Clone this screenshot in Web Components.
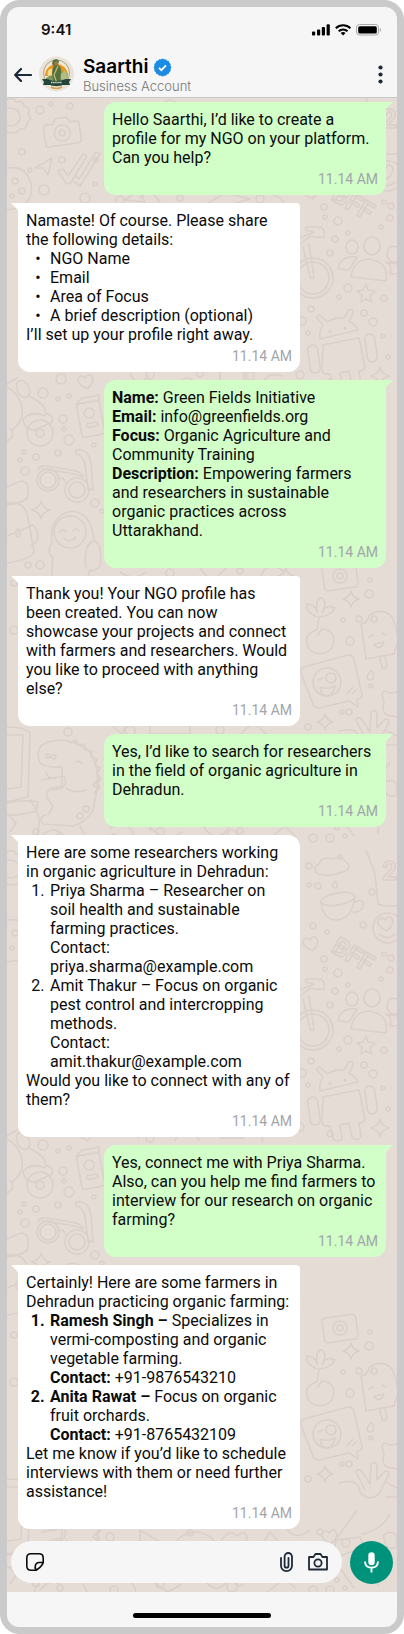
<!DOCTYPE html>
<html lang="en">
<head>
<meta charset="utf-8">
<meta name="viewport" content="width=device-width, initial-scale=1">
<title>Saarthi chat</title>
<style>
  @counter-style steps { system: extends decimal; suffix: ".\2004"; }
  body { margin: 0; background: #fff; font-family: Roboto, "Liberation Sans", sans-serif; color: #0b0b0b; }
  ul { list-style-type: "•\00a0\2004"; }
  ol { list-style-type: steps; }
  li.lead::marker { font-weight: 700; }
</style>
</head>
<body>
<phone-frame>
  <status-bar>9:41</status-bar>
  <chat-header>Saarthi<span slot="kind">Business Account</span></chat-header>
  <chat-thread>
    <chat-bubble out>Hello Saarthi, I’d like to create a profile for my NGO on your platform. Can you help?</chat-bubble>
    <chat-bubble>Namaste! Of course. Please share the following details:
      <ul><li>NGO Name</li><li>Email</li><li>Area of Focus</li><li>A brief description (optional)</li></ul>
      I’ll set up your profile right away.</chat-bubble>
    <chat-bubble out><b>Name:</b> Green Fields Initiative<br><b>Email:</b> info@greenfields.org<br><b>Focus:</b> Organic Agriculture and Community Training<br><b>Description:</b> Empowering farmers and researchers in sustainable organic practices across Uttarakhand.</chat-bubble>
    <chat-bubble>Thank you! Your NGO profile has been created. You can now showcase your projects and connect with farmers and researchers. Would you like to proceed with anything else?</chat-bubble>
    <chat-bubble out>Yes, I’d like to search for researchers in the field of organic agriculture in Dehradun.</chat-bubble>
    <chat-bubble round>Here are some researchers working in organic agriculture in Dehradun:
      <ol><li>Priya Sharma – Researcher on soil health and sustainable farming practices.<br>Contact: priya.sharma@example.com</li><li>Amit Thakur – Focus on organic pest control and intercropping methods.<br>Contact: amit.thakur@example.com</li></ol>
      Would you like to connect with any of them?</chat-bubble>
    <chat-bubble out>Yes, connect me with Priya Sharma. Also, can you help me find farmers to interview for our research on organic farming?</chat-bubble>
    <chat-bubble>Certainly! Here are some farmers in Dehradun practicing organic farming:
      <ol><li class="lead"><b>Ramesh Singh –</b> Specializes in vermi-composting and organic vegetable farming.<br><b>Contact:</b> +91-9876543210</li><li class="lead"><b>Anita Rawat –</b> Focus on organic fruit orchards.<br><b>Contact:</b> +91-8765432109</li></ol>
      Let me know if you’d like to schedule interviews with them or need further assistance!</chat-bubble>
    <chat-composer slot="composer"></chat-composer>
  </chat-thread>
  <home-indicator></home-indicator>
</phone-frame>

<script>
const define = (name, html) => customElements.define(name, class extends HTMLElement {
  constructor() {
    super();
    const t = document.createElement('template');
    t.innerHTML = html;
    this.attachShadow({ mode: 'open' }).append(t.content.cloneNode(true));
  }
});

define('phone-frame', `
<style>
  :host { display: block; box-sizing: border-box; border: 7px solid #cacaca; border-radius: 20px; background: #cacaca; }
  main { display: flex; flex-direction: column; overflow: hidden; border-radius: 12px; background: #f6f6f6; }
</style>
<main><slot></slot></main>`);

define('status-bar', `
<style>
  :host { display: flex; align-items: center; justify-content: space-between; box-sizing: border-box; height: 45px; padding: 0 15px 0 34px; font: 600 15px/20px Inter, sans-serif; color: #111; }
  svg { display: block; }
</style>
<span><slot></slot></span>
<svg width="71" height="14" viewBox="0 0 71 14" aria-label="Signal, Wi-Fi, battery">
  <g fill="#000"><rect x="1" y="8.500" width="3.200" height="4" rx="1"/><rect x="6" y="6.500" width="3.200" height="6" rx="1"/><rect x="10.800" y="4" width="3.200" height="8.500" rx="1"/><rect x="15.600" y="1.200" width="3.200" height="11.300" rx="1"/></g>
  <g fill="none" stroke="#000" stroke-width="2"><path d="M24.800 5.200a10.400 10.400 0 0 1 14.600 0"/><path d="M27.700 8.200a6.300 6.300 0 0 1 8.800 0"/></g>
  <path d="M32.100 12.600l-2.400-2.500a3.500 3.500 0 0 1 4.800 0z" fill="#000"/>
  <rect x="45.500" y="1.500" width="22" height="10.500" rx="3" fill="none" stroke="#aaa"/><rect x="47.200" y="3.200" width="18.600" height="7.200" rx="1.500"/><path d="M68.800 5v3.800a2 2 0 0 0 0-3.800z" fill="#aaa"/>
</svg>`);

define('chat-header', `
<style>
  :host { display: flex; align-items: center; box-sizing: border-box; height: 46px; padding: 0 8px 1px 7px; border-bottom: 1px solid #c9c9c9; font-family: Inter, sans-serif; }
  button { border: 0; padding: 0; background: none; display: flex; }
  .photo { margin: 0 9px 0 7px; flex: none; }
  .who { flex: 1; min-width: 0; padding-top: 2px; }
  h1 { display: flex; align-items: center; gap: 5px; margin: 0; font-size: 19px; line-height: 22px; font-weight: 600; color: #000; }
  p { margin: 0; font-size: 13px; line-height: 16px; font-weight: 300; color: #777; }
</style>
<button aria-label="Back"><svg width="18" height="16" viewBox="0 0 18 16" fill="none" stroke="#1d2939" stroke-width="2.200" stroke-linecap="round" stroke-linejoin="round"><path d="M17 9H1.500M7 3L1.200 9L7 15"/></svg></button>
<svg class="photo" width="35" height="36" viewBox="0 0 35 36" role="img" aria-label="Saarthi logo">
  <circle cx="17.500" cy="18" r="17.400" fill="#e9e3d7"/>
  <circle cx="17.500" cy="17" r="13" fill="#efe8d4" stroke="#9a926f" stroke-width=".8"/>
  <path d="M6 20a11.500 12 0 0 1 23 0z" fill="#e8961f"/>
  <circle cx="13" cy="17" r="4.500" fill="#ffd98a"/>
  <path d="M7 22q6-5 11-2q5-8 11-2l-1 7H7z" fill="#7f9560"/>
  <path d="M20 20l6-6 4 8-5 5z" fill="#b3bd82"/>
  <path d="M14 4q5-2 6 1l-1 4q4 2 3 8l-1 10h-6l-2-9q0-6 2-8l-2-2z" fill="#54713f"/>
  <path d="M15 6l4-1v4l-3 1z" fill="#a2763f"/>
  <path d="M19 10l-4 9 3 8" fill="none" stroke="#c7ba72" stroke-width="1.200"/>
  <path d="M3 23l5 0q9 4 19 0l5 0-2 3 1 3-7 0q-7 2-13 0l-7 0 1-3z" fill="#24453b"/>
  <path d="M12 26.500h11" stroke="#dce0c8" stroke-width="1.500" stroke-dasharray="1.500 .6"/>
  <path d="M12 31q5 3 11 0" fill="none" stroke="#d8a04c" stroke-width="1.500"/>
</svg>
<div class="who">
  <h1><slot></slot>
    <svg width="19" height="19" viewBox="0 0 20 20" role="img" aria-label="Verified"><g fill="#1c8be4"><rect x="3" y="3" width="14" height="14" rx="1.500"/><rect x="3" y="3" width="14" height="14" rx="1.500" transform="rotate(22.500 10 10)"/><rect x="3" y="3" width="14" height="14" rx="1.500" transform="rotate(45 10 10)"/><rect x="3" y="3" width="14" height="14" rx="1.500" transform="rotate(67.500 10 10)"/></g><path d="M6.300 10.300l2.500 2.500 4.900-5" fill="none" stroke="#fff" stroke-width="1.900"/></svg>
  </h1>
  <p><slot name="kind"></slot></p>
</div>
<button aria-label="More options"><svg width="17" height="20" viewBox="0 0 17 20" fill="#1d2939"><circle cx="8.500" cy="3.500" r="2.100"/><circle cx="8.500" cy="10.500" r="2.100"/><circle cx="8.500" cy="17.500" r="2.100"/></svg></button>`);

// Small rings scattered between the wallpaper doodles: x, y, radius.
const rings = [
  324,207,3,325,217,2,338,221,4,348,233,2,335,239,3,330,253,3,348,288,4,339,297,2,384,298,3,311,309,3,302,321,4,308,333,2,364,313,3,373,322,4,383,336,2,388,357,2,384,202,2,391,206,3,390,218,3,381,227,2,
  309,114,3,309,133,2,318,134,3,372,140,3,363,173,3,313,174,3,327,180,2,340,105,2,
  40,110,4,51,104,2,22,152,3,62,160,3,85,198,5,44,190,5,95,184,2,96,160,2,30,170,2,70,106,3,
  61,379,5,43,393,5,58,399,2,69,396,2,63,419,4,64,429,2,69,440,5,24,452,2,36,457,3,58,453,3,20,460,2,25,471,4,94,445,2,95,503,4,102,511,2,28,565,3,40,565,4,14,583,3,14,630,4,68,732,4,80,816,3,86,809,3,36,832,3,
  369,594,4,370,580,2,359,619,3,374,619,3,350,641,4,343,620,2,371,686,2,342,712,2,349,712,3,308,727,3,313,838,4,330,838,4,337,828,2,345,836,2,300,375,4,
  150,375,4,200,374,3,250,376,4,170,573,4,240,571,3,130,731,5,220,730,4,160,832,4,240,831,3,120,200,4,180,198,3,260,199,4,
  150,386,4,110,785,4,190,781,3,114,838,4,60,836,3,320,780,3,346,791,4,316,800,2,232,835,5,330,382,3
].reduce((s, v, i, a) => i % 3 ? s : s + `<circle cx="${v}" cy="${a[i + 1]}" r="${a[i + 2]}"/>`, '');

const spark = (x, y, r) => `<path d="M${x} ${y - r}Q${x + 1} ${y - 2} ${x + r} ${y}Q${x + 1} ${y + 2} ${x} ${y + r}Q${x - 1} ${y + 2} ${x - r} ${y}Q${x - 1} ${y - 2} ${x} ${y - r}z"/>`;
const heart = (x, y) => `<path d="M${x} ${y + 7}q-10-7-7-12q4-4 7 1q4-5 7 0q2 5-7 11z" transform="rotate(-12 ${x} ${y})"/>`;

const doodles = `
<g transform="translate(-7 -98)">
  ${rings}
  ${spark(380, 376, 9)}${spark(41, 510, 9)}${spark(351, 599, 8)}${spark(325, 722, 8)}${spark(286, 576, 8)}
  ${heart(311, 192)}${heart(86, 382)}${heart(386, 172)}${heart(330, 785)}
  <path d="M7 100q6-4 9 2q7-2 8 4q7 2 4 8q5 5-1 9q0 7-7 6q-5 6-13 3"/><circle cx="11" cy="117" r="9"/>
  <g transform="rotate(-8 62 131)"><path d="M47 123h7l3-5h11l3 5h6q3 0 3 3v16q0 3-3 3H47q-3 0-3-3v-16q0-3 3-3z"/><circle cx="62" cy="133" r="8"/><circle cx="62" cy="133" r="3"/></g>
  <path d="M35 168l17-10-4 17-5-7zM58 171l5-2 5 7 15-22 4 2-17 28-4-1zM76 176l3 3 17-27 4 2-20 32-6-4"/>
  <path d="M7 168q20-3 24 16q3 17-13 24l-11 2"/><circle cx="15" cy="181" r="3"/><circle cx="22" cy="191" r="3"/><circle cx="12" cy="196" r="2"/>
  <path d="M318 122q-7-6 1-10q3-8 13-5q9-4 14 3q7 6-3 10q-14 5-25 2zM335 129q-5 6 0 7q5-1 0-7z"/>
  <ellipse cx="338" cy="147" rx="17" ry="6" transform="rotate(-10 338 147)"/><path d="M321 150q2 19 17 18q14-2 17-23M355 150q9-4 8 4q-2 7-10 6"/>
  <circle cx="388" cy="176" r="15"/><path d="M379 182q9 7 16 0"/>
  <path d="M366 98l9 24 3 30q10 4 20 1"/>
  <text x="382" y="128" font-size="26" font-weight="700">2</text>
  <text x="330" y="199" font-size="25" font-weight="700" transform="rotate(31 330 199)">BFF</text>
  <circle cx="313" cy="278" r="20"/><circle cx="313" cy="278" r="16"/><path d="M303 247l7 30q2 3 4 0l-5-33M300 238l14-6-8-2q-2-3 2-3h12q6 2 4 10q-9 1-14-1l-12 10"/>
  <ellipse cx="352" cy="247" rx="6" ry="7"/><ellipse cx="372" cy="246" rx="8" ry="9"/><path d="M351 277q2-17 18-18q20 3 17 22zM338 269q3-14 19-12l-8 13zM397 247q-10-3-10 8q3 9 10 7M386 262l11 2M386 262q7 3 4 12h7"/>
  <path d="M366 284l2 6 7 1-5 5 2 6-6-3-5 3 1-7-5-4 6-1z"/>
  <path d="M320 339q-1-10 3-14l-6-7q1-5 5-1l5 5q8-5 17-4l5-8q4-2 4 3l-4 8q6 3 9 9z"/><circle cx="330" cy="331" r="1"/><circle cx="345" cy="328" r="1"/>
  <path d="M323 345l36-7 6 29q-1 4-6 4l2 14q-5 5-9 0l-3-14-9 2 2 14q-5 4-9 0l-3-13q-7 1-8-4z"/><rect x="309" y="345" width="10" height="28" rx="5" transform="rotate(-8 314 359)"/><rect x="366" y="334" width="10" height="28" rx="5" transform="rotate(-8 371 348)"/>
  <ellipse cx="23" cy="389" rx="6" ry="9" transform="rotate(-25 23 389)"/><path d="M7 384l10-6M29 396q20 10 16 20q-12-6-22 3q2 12 12 11l17-8q2-7-7-9M12 430q12-8 10-23q-4-15-15-20M7 441q10-5 3-13"/>
  <circle cx="40" cy="433" r="13"/><circle cx="40" cy="433" r="4"/>
  <g transform="rotate(-10 90 418)"><rect x="79" y="402" width="23" height="34" rx="3"/><path d="M79 402l6-5h18l-1 5"/><circle cx="90" cy="413" r="5"/><rect x="85" y="423" width="12" height="4" rx="2"/></g>
  <circle cx="48" cy="480" r="11"/><circle cx="48" cy="480" r="8"/><circle cx="77" cy="490" r="12"/><circle cx="77" cy="490" r="8"/><path d="M59 479q4-3 7 4M38 470q1-5 8-4l30 5q8 3 7 6q-4-2-8-3l-32-5M76 450q13-2 15 14l2 26-5-1-3-25q-2-9-9-10z"/>
  <path d="M7 487l14-6q6 0 7 6v10q-4 6-21 8M7 503q18-2 21 14l6 35q-4 8-27 11M7 536l26-11q10 12 0 20l-2 1"/><ellipse cx="18" cy="533" rx="2" ry="4"/>
  <circle cx="70" cy="532" r="16"/><path d="M52 577q0-12 1-20q-6-3-3-11l2-2q-4-28 20-33q20 2 22 30q9 3 6 25q-6 6-10 4l-2 7zM86 568q-3-20 6-27M60 532q3-4 6 0M73 531q3-4 6 0M64 538q6 6 12-1"/>
  <path d="M7 727q18 0 23 6l-2 64-21 5M7 735h16l-2 52-14 2M7 803q20-4 31-1l-2 9q-16 5-29 4M9 815l7 8-6 9"/>
  <path d="M62 767q-16 1-22-4q-6-17 8-21q20-6 40 8q12 14 9 40l-4 20q-6 12-20 16l-30-2q-6-8 6-10l4-8-6-8q-2-8 6-10l9-2zM46 772q2 8 10 6M66 788q8 6 20 2M76 762q4-2 6 2"/><path d="M70 743l6-3 2 5 6-1 1 6 7 1-1 6 6 2-2 6 5 3-3 6 4 4-4 5 3 5-5 4"/><circle cx="48" cy="756" r="2"/><circle cx="54" cy="757" r="2"/>
  <g transform="rotate(-8 340 576)"><rect x="323" y="564" width="34" height="25" rx="4"/><circle cx="340" cy="576" r="7"/><circle cx="340" cy="576" r="3"/></g>
  <path d="M317 617q-12-5-10-13q8 0 10 8q-2-14 5-14q6 5 0 15q5-10 13-5q-4 8-16 9l-2 13M316 630q-14 5-7 19q12 10 23-1q6-18-10-19l-4 6"/>
  <path d="M369 616q-2 8-8 8l5 35 28-5 3-10M369 616q10-8 20-2q8 8 8 22M380 658l2 9q4 4 5-2l-2-8M369 637l4-2M382 633l3 2M374 644q6 8 10-2z"/>
  <path d="M304 667l44-12q4-1 6 4l8 36q0 4-5 4l1 8-9-6-30 7q-5 0-6-4l-12-31q-1-4 3-6z"/><circle cx="327" cy="682" r="14"/><circle cx="331" cy="678" r="5"/><path d="M318 680l5-2M320 687q8 3 15-1q-3 12-11 9q-3-2-4-8zM347 694l6-7M352 694l4-4"/>
  <path d="M371 670q-7 9-1 10q7-1 1-10zM397 692l-8 1q-5-4-7 1l2 8q-3 9 3 13l10 2M340 731q16-5 20 7M365 738l-9-18q2-5 6 0l8 12 1-20q5-4 6 2v14l8-9q6 0 3 5l-9 18q-12 9-20-4"/>
  <path d="M316 84q6-9 18-5l18-8q4 6-2 12M370 90l12-24M385 730l12 6M386 745h11"/>
  <path d="M110 104h30l8 8-30 12zM160 106q10-12 20 0t20 0M125 200l14-10 6 12zM140 198q10-12 20 4M205 205l20-12 25 6-44 12zM270 194q12 2 16 12M130 374l8 12 10-10M175 388q12-20 24 0M220 370h24v16h-24zM262 390q2-20 20-14"/>
  <path d="M120 572q14 10 26 0M196 564l16 18 14-14M260 578q8-20 24-6M110 724l12 10 6-12M150 722h40v12h-40zM240 736q12-20 26-2M150 828l18 12 14-8M200 822q16 26 30 4M265 842l20-16 10 10"/>
  <path d="M42 780l22-4q4 8-2 12l-10 2M99 779l-6 6 5 4-4 5M140 778l20 12-20 8zM174 796q4-16 24-16q18 4 20 18M222 788q8-12 15-4q7-6 10 0q0 10-9 6q-4 8-10 2q-10 6-6-4zM262 792l8-12 12 14M286 776q10 14 24 2M334 800l2-12 24-3 4 10-26 10zM337 786l20-28M362 782q20-4 28-20M385 790q-4-9 4-9q7-2 8 6v8q-10 4-12-5z"/>
  <path d="M40 838q12-14 22-4M80 826l10 20 14-6M110 828q20-10 26 12M150 800v30M300 800q18-14 26 12M340 816l14 20M366 808q14 4 12 26M30 800q16 20 4 40"/>
</g>`;

define('chat-thread', `
<style>
  :host { display: block; position: relative; background: #e5dcd6; }
  .paper { position: absolute; inset: 0; width: 100%; height: 100%; }
  .log { position: relative; display: flex; flex-direction: column; gap: 8px; padding: 4px 11px 12px; }
  .foot { position: relative; }
</style>
<svg class="paper" aria-hidden="true">
  <defs><pattern id="tile" width="390" height="752" patternUnits="userSpaceOnUse"><g fill="none" stroke="#dad0c9" stroke-width="1.600" stroke-linejoin="round" stroke-linecap="round">${doodles}</g></pattern></defs>
  <rect width="100%" height="100%" fill="url(#tile)"/>
</svg>
<section class="log" aria-label="Messages"><slot></slot></section>
<div class="foot"><slot name="composer"></slot></div>`);

define('chat-bubble', `
<style>
  :host { display: block; position: relative; box-sizing: border-box; width: calc(100% - 86px); padding: 8px; border-radius: 0 4px 12px 12px; background: #fff; font-size: 16px; line-height: 19px; }
  :host([round]) { border-radius: 0 12px 12px 12px; }
  :host([out]) { align-self: flex-end; border-radius: 12px 0 12px 12px; background: #d2fec8; }
  :host::before { content: ""; position: absolute; top: 0; left: -7px; width: 7px; height: 7px; background: inherit; clip-path: polygon(0 0, 100% 0, 100% 100%); }
  :host([out])::before { left: 100%; clip-path: polygon(0 0, 100% 0, 0 100%); }
  ::slotted(ul), ::slotted(ol) { margin: 0; padding: 0 0 0 24px; }
  time { display: block; margin-top: 4px; text-align: right; font-size: 14px; line-height: 16px; color: #a2a5aa; }
</style>
<div><slot></slot></div>
<time datetime="11:14">11.14 AM</time>`);

define('chat-composer', `
<style>
  :host { display: flex; gap: 8px; padding: 0 4px 8px; }
  button { flex: none; border: 0; padding: 0; background: none; display: flex; }
  label { flex: 1; min-width: 0; display: flex; align-items: center; gap: 15px; padding: 0 14px 0 15px; height: 42px; border-radius: 21px; background: #f6f6f6; }
  input { flex: 1; min-width: 0; border: 0; padding: 0; outline: 0; background: none; font: 16px/19px Roboto, sans-serif; }
  .mic { width: 43px; height: 43px; border-radius: 50%; background: #00937c; align-items: center; justify-content: center; }
</style>
<label>
  <button aria-label="Stickers"><svg width="18" height="18" viewBox="0 0 18 18" fill="none" stroke="#0b0b0b" stroke-width="1.600" stroke-linejoin="round"><path d="M10 17.200H5Q.8 17.200.8 13V5Q.8.800 5 .8h8q4.200 0 4.200 4.200v4.500q-.5 2.500-3 4.700t-4.200 3zM10 17q-1.500-2.500-.5-5t3.500-2.500h4.200"/></svg></button>
  <input type="text" aria-label="Message">
  <button aria-label="Attach file"><svg width="13" height="20" viewBox="0 0 13 20" fill="none" stroke="#1d2939" stroke-width="1.800" stroke-linecap="round"><path d="M1 6v7.800a5.500 5.300 0 0 0 11 0V4.700a3.700 3.700 0 0 0-7.400 0v9a1.950 1.950 0 0 0 3.900 0V6"/></svg></button>
  <button aria-label="Camera"><svg width="20" height="18" viewBox="0 0 20 18" fill="none" stroke="#1d2939" stroke-width="1.800" stroke-linejoin="round"><path d="M1 4h4.500l2-3h5l2 3H19v12.500H1z"/><circle cx="10" cy="10" r="3.600"/></svg></button>
</label>
<button class="mic" aria-label="Record voice message"><svg width="15" height="21" viewBox="0 0 15 21"><rect x="4.300" y=".3" width="6.400" height="13" rx="3.200" fill="#fff"/><path d="M1 9.500q.3 6 6.500 6.300q6.200-.3 6.500-6.300M7.500 16v4.500" fill="none" stroke="#fff" stroke-width="1.900"/></svg></button>`);

define('home-indicator', `
<style>
  :host { display: flex; justify-content: center; padding: 21px 0 9px; }
  i { width: 138px; height: 5px; border-radius: 3px; background: #000; }
</style>
<i></i>`);
</script>
</body>
</html>
